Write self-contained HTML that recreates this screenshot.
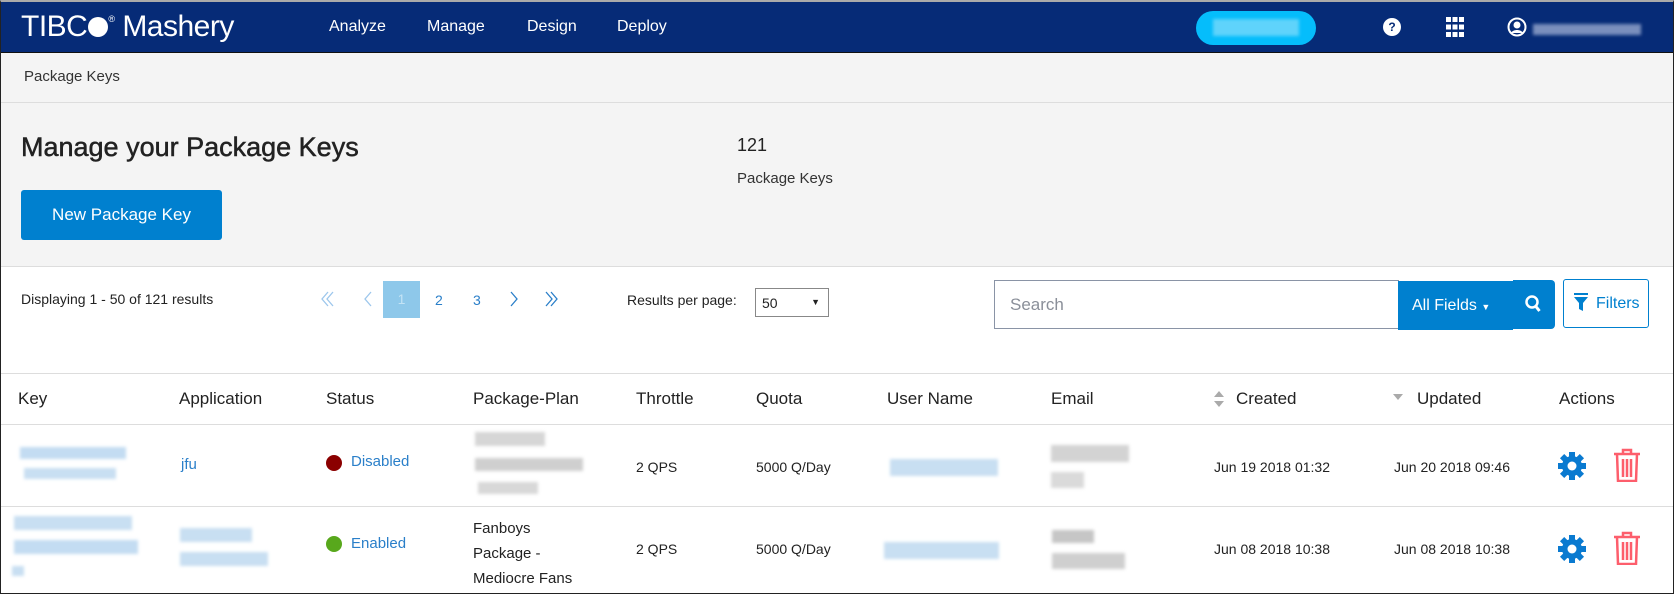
<!DOCTYPE html>
<html><head><meta charset="utf-8"><style>
*{box-sizing:border-box;margin:0;padding:0}
body{width:1674px;height:594px;overflow:hidden;font-family:"Liberation Sans",sans-serif;color:#222;background:#fff;position:relative}
.a{position:absolute;white-space:nowrap}
.frame{position:absolute;left:0;top:0;width:1674px;height:594px;border:1px solid #222;border-top:2px solid #aaa;pointer-events:none}
.nav{position:absolute;left:0;top:0;width:1674px;height:53px;background:#062b77;border-bottom:1px solid #111}
.nav .l{color:#fff;font-size:16px;top:18px}
.hdr{position:absolute;left:0;top:53px;width:1674px;height:214px;background:#f4f4f4}
.ln{position:absolute;left:0;width:1674px;height:1px;background:#ddd}
.blur{position:absolute;filter:blur(1.5px)}
.th{font-size:17px;top:389px;color:#222}
.td{font-size:14px;color:#222}
.lk{color:#2a7fc9}
</style></head><body>
<div class="nav">
 <div class="a" style="left:21px;top:10px;color:#fff;font-size:30px;letter-spacing:-0.5px">TIBC<span style="display:inline-block;width:20px;height:20px;border-radius:50%;background:#fff;vertical-align:-1px;margin-left:1px"></span><sup style="font-size:9px;vertical-align:14px">®</sup> Mashery</div>
 <div class="a l" style="left:329px">Analyze</div>
 <div class="a l" style="left:427px">Manage</div>
 <div class="a l" style="left:527px">Design</div>
 <div class="a l" style="left:617px">Deploy</div>
 <div class="a" style="left:1196px;top:11px;width:120px;height:34px;border-radius:17px;background:#05bdfb"></div>
 <div class="blur" style="left:1213px;top:19px;width:86px;height:17px;background:#5fd3fb"></div>
 <div class="a" style="left:1383px;top:18px;width:18px;height:18px;border-radius:50%;background:#fff;color:#062b77;font-size:12px;font-weight:bold;text-align:center;line-height:18px">?</div>
 <svg class="a" style="left:1446px;top:17px" width="18" height="20" viewBox="0 0 18 20" fill="#fff"><rect x="0" y="0" width="5" height="5"/><rect x="6.5" y="0" width="5" height="5"/><rect x="13" y="0" width="5" height="5"/><rect x="0" y="7.5" width="5" height="5"/><rect x="6.5" y="7.5" width="5" height="5"/><rect x="13" y="7.5" width="5" height="5"/><rect x="0" y="15" width="5" height="5"/><rect x="6.5" y="15" width="5" height="5"/><rect x="13" y="15" width="5" height="5"/></svg>
 <svg class="a" style="left:1507px;top:17px" width="20" height="22" viewBox="0 0 20 22"><circle cx="10" cy="10" r="8.5" fill="none" stroke="#fff" stroke-width="2"/><circle cx="10" cy="8" r="3.5" fill="#fff"/><path d="M4 16c2-4 10-4 12 0" fill="#fff"/></svg>
 <div class="blur" style="left:1533px;top:24px;width:108px;height:11px;background:#7a8fbd"></div>
</div>
<div class="hdr">
 <div class="a" style="left:24px;top:15px;font-size:15px;color:#333">Package Keys</div>
 <div class="ln" style="top:49px"></div>
 <div class="a" style="left:21px;top:79px;font-size:27px;color:#222;-webkit-text-stroke:0.5px #222">Manage your Package Keys</div>
 <div class="a" style="left:737px;top:82px;font-size:18px">121</div>
 <div class="a" style="left:737px;top:117px;font-size:15px;color:#333">Package Keys</div>
 <div class="a" style="left:21px;top:137px;width:201px;height:50px;background:#0080cf;border-radius:3px;color:#fff;font-size:17px;text-align:center;line-height:50px">New Package Key</div>
</div>
<div class="ln" style="top:266px"></div>
<div class="a" style="left:21px;top:291px;font-size:14px">Displaying 1 - 50 of 121 results</div>
<svg class="a" style="left:320px;top:291px" width="260" height="16" viewBox="0 0 260 16" fill="none" stroke-width="1.3">
 <path d="M8 1L2 8l6 7M13 1L7 8l6 7" stroke="#9cc6ec"/>
 <path d="M51 1l-6 7 6 7" stroke="#9cc6ec"/>
 <path d="M191 1l6 7-6 7" stroke="#2a7fc9"/>
 <path d="M226 1l6 7-6 7M231 1l6 7-6 7" stroke="#2a7fc9"/>
</svg>
<div class="a" style="left:383px;top:281px;width:37px;height:37px;background:#8ec8ea;color:#c3e3f5;font-size:14px;text-align:center;line-height:37px">1</div>
<div class="a lk" style="left:435px;top:292px;font-size:14px">2</div>
<div class="a lk" style="left:473px;top:292px;font-size:14px">3</div>
<div class="a" style="left:627px;top:292px;font-size:14px">Results per page:</div>
<div class="a" style="left:755px;top:288px;width:74px;height:29px;border:1px solid #888;background:#fff;font-size:14px;padding:6px 6px">50<span style="position:absolute;right:8px;top:8px;font-size:9px">▼</span></div>
<div class="a" style="left:994px;top:280px;width:405px;height:49px;border:1px solid #8a94a6;background:#fff;color:#8a8f99;font-size:17px;padding:14px 15px">Search</div>
<div class="a" style="left:1398px;top:281px;width:115px;height:49px;background:#0080cf;color:#fff;font-size:16px;line-height:49px;padding-left:14px">All Fields <span style="font-size:9px">▼</span></div>
<div class="a" style="left:1513px;top:280px;width:42px;height:49px;background:#0080cf;border-radius:0 4px 4px 0"></div>
<svg class="a" style="left:1524px;top:294px" width="18" height="20" viewBox="0 0 18 20"><circle cx="8" cy="8" r="5.5" fill="none" stroke="#fff" stroke-width="2.5"/><path d="M11.5 12l4 5" stroke="#fff" stroke-width="3"/></svg>
<div class="a" style="left:1563px;top:279px;width:86px;height:49px;border:1px solid #0080cf;border-radius:3px;background:#fff;color:#0080cf;font-size:16px;line-height:47px;padding-left:32px">Filters</div>
<svg class="a" style="left:1574px;top:293px" width="14" height="18" viewBox="0 0 14 18" fill="#0080cf"><rect x="0" y="0" width="14" height="2"/><path d="M0 4h14l-5 6v8l-4-2v-6z"/></svg>
<div class="ln" style="top:373px"></div>
<div class="a th" style="left:18px">Key</div>
<div class="a th" style="left:179px">Application</div>
<div class="a th" style="left:326px">Status</div>
<div class="a th" style="left:473px">Package-Plan</div>
<div class="a th" style="left:636px">Throttle</div>
<div class="a th" style="left:756px">Quota</div>
<div class="a th" style="left:887px">User Name</div>
<div class="a th" style="left:1051px">Email</div>
<svg class="a" style="left:1213px;top:390px" width="12" height="18" viewBox="0 0 12 18" fill="#aaa"><path d="M1 7L6 1l5 6zM1 11l5 6 5-6z"/></svg>
<div class="a th" style="left:1236px">Created</div>
<svg class="a" style="left:1392px;top:393px" width="12" height="8" viewBox="0 0 12 8" fill="#aaa"><path d="M1 1l5 6 5-6z"/></svg>
<div class="a th" style="left:1417px">Updated</div>
<div class="a th" style="left:1559px">Actions</div>
<div class="ln" style="top:424px"></div>
<!-- row 1 -->
<div class="blur" style="left:20px;top:447px;width:106px;height:12px;background:#c3dcf2"></div>
<div class="blur" style="left:24px;top:468px;width:92px;height:11px;background:#c8dff2"></div>
<div class="a lk" style="left:181px;top:456px;font-size:15px">jfu</div>
<div class="a" style="left:326px;top:455px;width:16px;height:16px;border-radius:50%;background:#8b0000"></div>
<div class="a lk" style="left:351px;top:453px;font-size:15px">Disabled</div>
<div class="blur" style="left:475px;top:432px;width:70px;height:14px;background:#d6d6d6"></div>
<div class="blur" style="left:475px;top:458px;width:108px;height:13px;background:#cfcfcf"></div>
<div class="blur" style="left:478px;top:482px;width:60px;height:12px;background:#d8d8d8"></div>
<div class="a td" style="left:636px;top:459px">2 QPS</div>
<div class="a td" style="left:756px;top:459px">5000 Q/Day</div>
<div class="blur" style="left:890px;top:459px;width:108px;height:17px;background:#c8dff2"></div>
<div class="blur" style="left:1051px;top:445px;width:78px;height:17px;background:#d3d3d3"></div>
<div class="blur" style="left:1051px;top:472px;width:33px;height:16px;background:#dadada"></div>
<div class="a td" style="left:1214px;top:459px">Jun 19 2018 01:32</div>
<div class="a td" style="left:1394px;top:459px">Jun 20 2018 09:46</div>
<svg class="a" style="left:1558px;top:452px" width="28" height="28" viewBox="0 0 28 28"><g fill="#0a7ad0" transform="translate(14 14)"><circle r="10"/><rect x="-3" y="-14" width="6" height="28"/><rect x="-3" y="-14" width="6" height="28" transform="rotate(45)"/><rect x="-3" y="-14" width="6" height="28" transform="rotate(90)"/><rect x="-3" y="-14" width="6" height="28" transform="rotate(135)"/></g><circle cx="14" cy="14" r="4.5" fill="#fff"/></svg>
<svg class="a" style="left:1613px;top:448px" width="28" height="34" viewBox="0 0 28 34" fill="none" stroke="#fd5e6c" stroke-width="2.5"><path d="M1 6h26M10 6V2h8v4M4 6l1 27h18l1-27M10 11v18M14 11v18M18 11v18"/></svg>
<div class="ln" style="top:506px"></div>
<!-- row 2 -->
<div class="blur" style="left:14px;top:516px;width:118px;height:14px;background:#c8dff2"></div>
<div class="blur" style="left:14px;top:540px;width:124px;height:14px;background:#c3dcf2"></div>
<div class="blur" style="left:12px;top:566px;width:12px;height:10px;background:#c8dff2"></div>
<div class="blur" style="left:180px;top:528px;width:72px;height:14px;background:#c8dff2"></div>
<div class="blur" style="left:180px;top:552px;width:88px;height:14px;background:#c8dff2"></div>
<div class="a" style="left:326px;top:536px;width:16px;height:16px;border-radius:50%;background:#58a81c"></div>
<div class="a lk" style="left:351px;top:535px;font-size:15px">Enabled</div>
<div class="a td" style="left:473px;top:516px;font-size:15px;line-height:25px">Fanboys<br>Package -<br>Mediocre Fans</div>
<div class="a td" style="left:636px;top:541px">2 QPS</div>
<div class="a td" style="left:756px;top:541px">5000 Q/Day</div>
<div class="blur" style="left:884px;top:542px;width:115px;height:17px;background:#c8dff2"></div>
<div class="blur" style="left:1052px;top:530px;width:42px;height:13px;background:#c6c6c6"></div>
<div class="blur" style="left:1052px;top:553px;width:73px;height:16px;background:#cfcfcf"></div>
<div class="a td" style="left:1214px;top:541px">Jun 08 2018 10:38</div>
<div class="a td" style="left:1394px;top:541px">Jun 08 2018 10:38</div>
<svg class="a" style="left:1558px;top:535px" width="28" height="28" viewBox="0 0 28 28"><g fill="#0a7ad0" transform="translate(14 14)"><circle r="10"/><rect x="-3" y="-14" width="6" height="28"/><rect x="-3" y="-14" width="6" height="28" transform="rotate(45)"/><rect x="-3" y="-14" width="6" height="28" transform="rotate(90)"/><rect x="-3" y="-14" width="6" height="28" transform="rotate(135)"/></g><circle cx="14" cy="14" r="4.5" fill="#fff"/></svg>
<svg class="a" style="left:1613px;top:531px" width="28" height="34" viewBox="0 0 28 34" fill="none" stroke="#fd5e6c" stroke-width="2.5"><path d="M1 6h26M10 6V2h8v4M4 6l1 27h18l1-27M10 11v18M14 11v18M18 11v18"/></svg>
<div class="frame"></div>
</body></html>
